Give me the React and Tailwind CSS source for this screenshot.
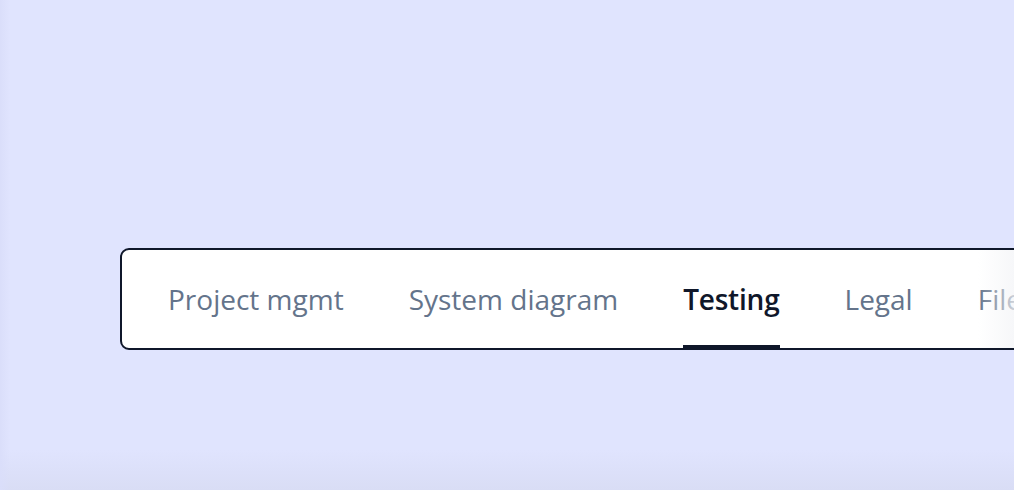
const tabs = ['Project mgmt', 'System diagram', 'Testing', 'Legal', 'Files', 'Settings'];

export default function App() {
  const active = 'Testing';

  return (
    <div className="relative h-[490px] w-[1014px] overflow-hidden bg-[#e0e4fe] font-['Open_Sans',sans-serif]">
      <div className="pointer-events-none absolute inset-x-0 bottom-0 h-[40px] bg-gradient-to-b from-transparent to-[#d9ddf5]" />
      <div className="pointer-events-none absolute inset-y-0 left-0 w-[10px] bg-gradient-to-r from-[#dadefa] to-transparent" />

      <div className="flex h-full items-start pl-[120px] pt-[248px]">
        <div className="relative h-[102px] w-[1000px] shrink-0 overflow-hidden rounded-[9px] border-2 border-[#0f172a] bg-white">
          <div className="flex h-full items-stretch gap-[65px] pl-[46px]">
            {tabs.map((tab) => (
              <button
                key={tab}
                type="button"
                className={`relative flex items-center whitespace-nowrap text-[28px] leading-none ${
                  tab === active ? 'font-semibold tracking-[-0.2px] text-[#0f172a]' : 'text-[#64748b]'
                }`}
              >
                {tab}
                {tab === active && (
                  <span className="absolute inset-x-0 bottom-0 h-[3px] bg-[#0f172a]" />
                )}
              </button>
            ))}
          </div>
          <div className="pointer-events-none absolute inset-y-0 right-[100px] w-[40px] bg-gradient-to-r from-white/0 to-[#f3f4f7]/80" />
          <div className="pointer-events-none absolute inset-y-0 right-0 w-[100px] bg-[#f3f4f7]/80" />
        </div>
      </div>
    </div>
  );
}
